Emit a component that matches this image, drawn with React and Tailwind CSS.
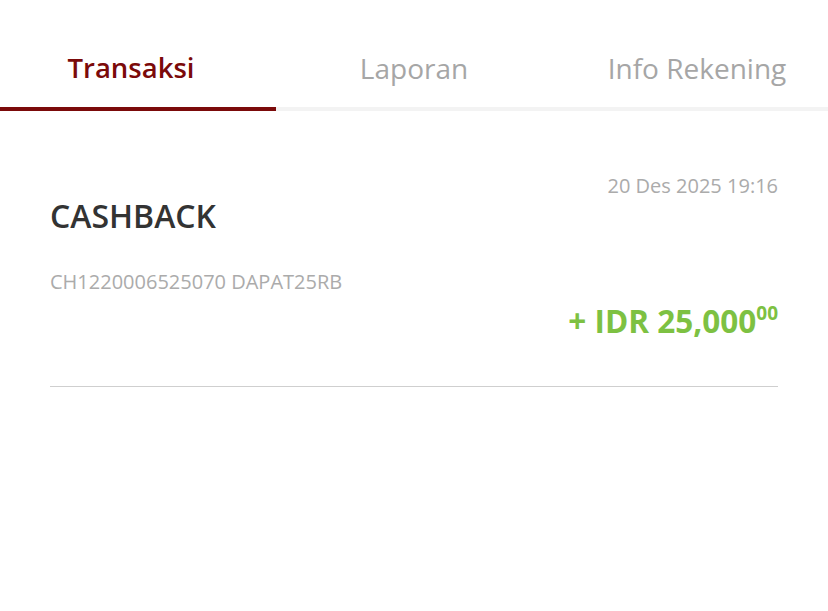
export default function App() {
  return (
    <div className="w-[828px] h-[611px] bg-white" style={{ fontFamily: '"Open Sans", sans-serif' }}>
      <div className="grid grid-cols-3">
        <div className="flex flex-col">
          <div className="pt-[49px] pb-[20px] pr-[14px] text-center text-[27.5px] leading-[38px] font-semibold text-[#7b0a0a]">Transaksi</div>
          <div className="h-[4px] bg-[#7b0a0a]" />
        </div>
        <div className="flex flex-col">
          <div className="pt-[49px] pb-[20px] text-center text-[28px] leading-[38px] text-[#a6a6a6]">Laporan</div>
          <div className="h-[4px] bg-[#f3f3f3]" />
        </div>
        <div className="flex flex-col">
          <div className="pt-[49px] pb-[20px] pl-[14px] text-center text-[28px] leading-[38px] text-[#a6a6a6]">Info Rekening</div>
          <div className="h-[4px] bg-[#f3f3f3]" />
        </div>
      </div>
      <div className="mx-[50px] mt-[63px] border-b border-[#cfcfcf] pb-[45px]">
        <div className="text-right text-[20px] leading-[24px] text-[#ababab]">20 Des 2025 19:16</div>
        <div className="text-[32px] leading-[36px] font-semibold text-[#333333]">CASHBACK</div>
        <div className="mt-[34px] text-[20px] leading-[28px] text-[#ababab]">CH1220006525070 DAPAT25RB</div>
        <div className="mt-[5px] flex justify-end items-start font-bold text-[#7dc142]">
          <span className="text-[31.5px] leading-[40px]">+ IDR 25,000</span>
          <span className="text-[19px] leading-[19px] mt-[3px]">00</span>
        </div>
      </div>
    </div>
  );
}
